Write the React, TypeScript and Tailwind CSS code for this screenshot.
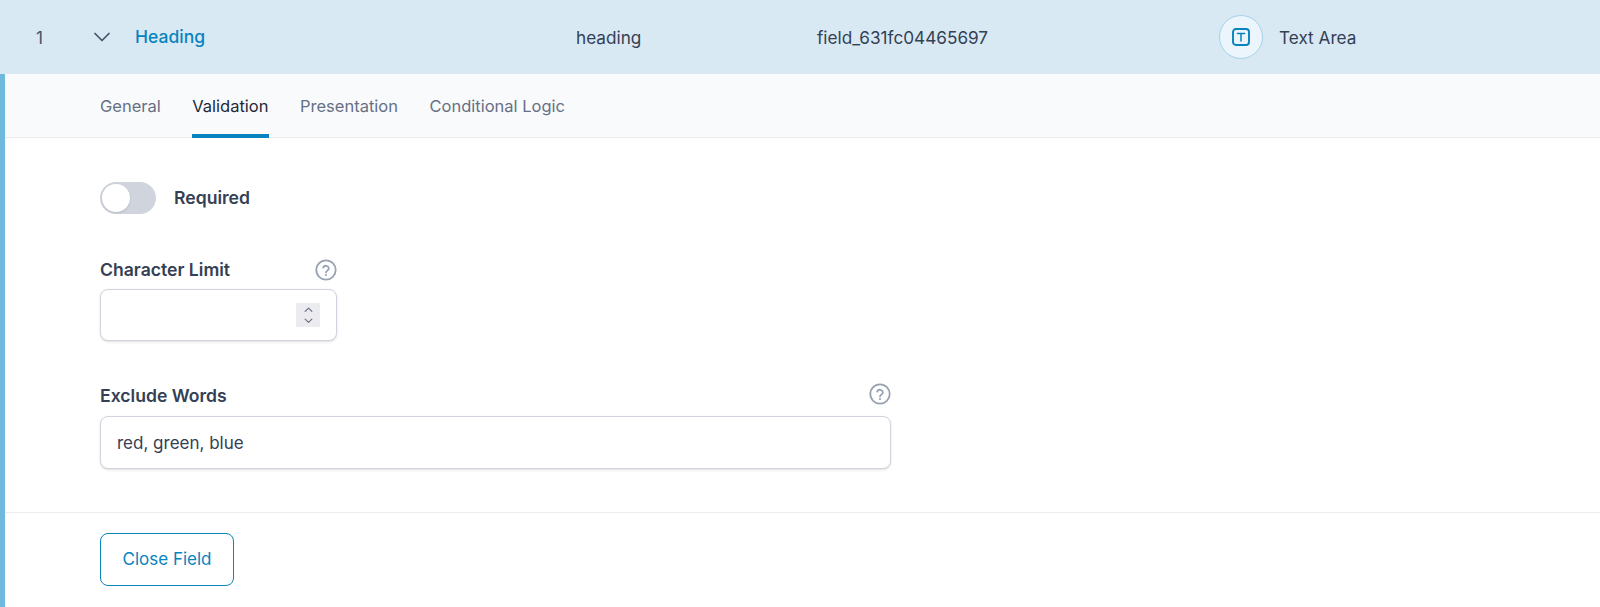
import React from "react";
import { ChevronDown, ChevronUp } from "lucide-react";

const tabs = ["General", "Validation", "Presentation", "Conditional Logic"];

function HelpIcon() {
    return (
        <svg width="22" height="22" viewBox="0 0 22 22" fill="none" className="text-[#98a2b3]">
            <circle cx="11" cy="11" r="9.7" stroke="currentColor" strokeWidth="1.8" />
            <path d="M8.2 8.6a2.9 2.9 0 0 1 5.6.9c0 1.9-2.8 2.3-2.8 3.9" stroke="currentColor" strokeWidth="1.8" strokeLinecap="round" />
            <circle cx="11" cy="16" r="1.05" fill="currentColor" />
        </svg>
    );
}

export default function App() {
    return (
        <div className="h-[607px] w-[1600px] overflow-hidden bg-white text-[17px] text-[#344054] font-['Inter',sans-serif]">
            <div className="flex h-[74px] items-center bg-[#d8e9f4] pt-[1px] text-[17.2px]">
                <span className="ml-[36px] w-[52px] text-[#475467]">1</span>
                <ChevronDown size={28} strokeWidth={1.5} className="-mt-[1px] w-[28px] text-[#475467]" />
                <span className="ml-[19px] w-[441px] font-medium text-[#0783be] text-[17.5px]">Heading</span>
                <span className="w-[241px]">heading</span>
                <span className="w-[402px]">field_631fc04465697</span>
                <div className="-mt-[1px] flex h-[44px] w-[44px] items-center justify-center rounded-full border border-[#a5d2ea] bg-[#ebf5fb]">
                    <svg width="18" height="18" viewBox="0 0 18 18" fill="none" className="text-[#0783be]">
                        <rect x="1" y="1" width="16" height="16" rx="3" stroke="currentColor" strokeWidth="1.9" />
                        <path d="M5.4 5.4h7.2M9 5.4v7.6" stroke="currentColor" strokeWidth="1.5" strokeLinecap="round" />
                    </svg>
                </div>
                <span className="ml-[16px]">Text Area</span>
            </div>
            <div className="h-[533px] border-l-[5px] border-[#6fb8de]">
                <div className="flex h-[64px] gap-[31.5px] border-b border-[#eaecf0] bg-[#f9fafb] pl-[95px] text-[16.5px]">
                    {tabs.map((tab) => (
                        <div
                            key={tab}
                            className={tab == "Validation"
                                ? "flex h-[64px] items-center border-b-[4px] border-[#0783be] pt-[5px] text-[#1d2939]"
                                : "flex h-[64px] items-center pt-[1px] text-[#667085]"}
                        >
                            {tab}
                        </div>
                    ))}
                </div>
                <div className="pl-[95px] text-[17.6px]">
                    <div className="mt-[44px] flex h-[32px] items-center gap-[18px]">
                        <div className="flex h-[32px] w-[56px] items-center rounded-full bg-[#d0d5dd] pl-[2px]">
                            <div className="h-[28px] w-[28px] rounded-full bg-white shadow-sm"></div>
                        </div>
                        <span className="font-semibold">Required</span>
                    </div>
                    <div className="mt-[43px] flex w-[237px] items-center justify-between">
                        <span className="font-semibold">Character Limit</span>
                        <HelpIcon />
                    </div>
                    <div className="mt-[6px] flex h-[52px] w-[237px] items-center justify-end rounded-[8px] border border-[#d0d5dd] bg-white pr-[16px] shadow-sm">
                        <div className="flex h-[24px] w-[24px] flex-col items-center justify-center bg-[#ebebf0] text-[#667085]">
                            <ChevronUp size={15} strokeWidth={2} className="-mb-[1.5px]" />
                            <ChevronDown size={15} strokeWidth={2} className="-mt-[1.5px]" />
                        </div>
                    </div>
                    <div className="mt-[42px] flex w-[791px] items-start justify-between">
                        <span className="font-semibold">Exclude Words</span>
                        <HelpIcon />
                    </div>
                    <div className="mt-[6px] flex h-[53px] w-[791px] items-center rounded-[8px] border border-[#d0d5dd] bg-white px-[16px] pt-[2px] text-[17px] shadow-sm">
                        red, green, blue
                    </div>
                </div>
                <div className="mt-[43px] border-t border-[#eaecf0] pl-[95px] pt-[20px]">
                    <button className="flex h-[53px] w-[134px] items-center justify-center rounded-[8px] border-[1.5px] border-[#0783be] bg-white text-[#0783be]">
                        Close Field
                    </button>
                </div>
            </div>
        </div>
    );
}
